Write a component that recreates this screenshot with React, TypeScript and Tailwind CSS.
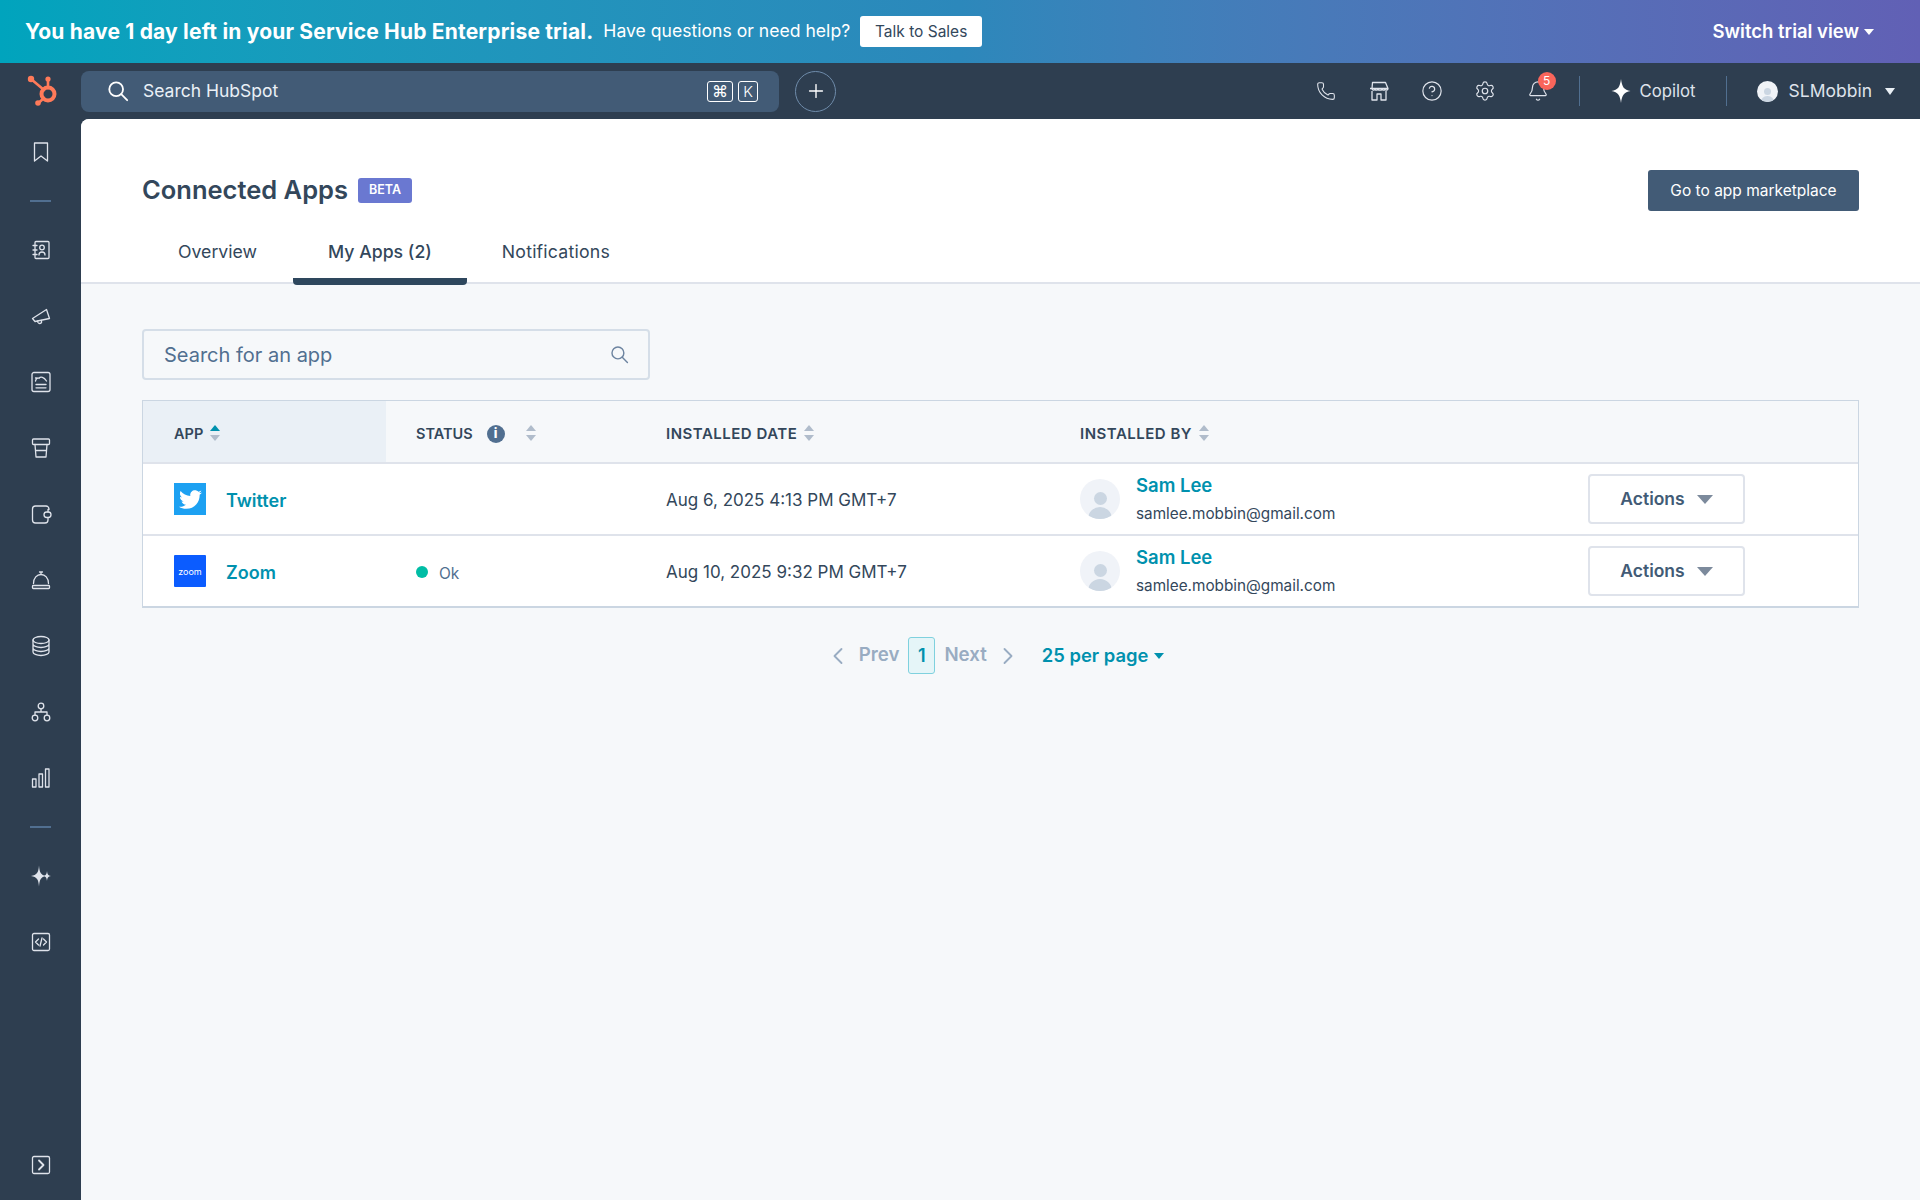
import { Phone, CircleHelp, Settings, Bell, Plus, ChevronLeft, ChevronRight } from "lucide-react"
import { FaTwitter } from "react-icons/fa"

const Ic = ({ children }: { children: React.ReactNode }) => (
  <svg width="24" height="24" viewBox="0 0 24 24" fill="none" stroke="currentColor" strokeWidth="1.3" strokeLinejoin="round" strokeLinecap="round" className="shrink-0 text-[#dfe3eb]">
    {children}
  </svg>
)

const Caret = ({ className }: { className: string }) => (
  <span className={`inline-block w-0 h-0 border-x-transparent border-b-0 ${className}`} />
)

const Magnifier = ({ className, stroke = 2 }: { className: string; stroke?: number }) => (
  <svg viewBox="0 0 24 24" fill="none" stroke="currentColor" strokeWidth={stroke} strokeLinecap="round" className={className}>
    <circle cx="10" cy="10" r="7.500" />
    <path d="M15.500 15.500 22 22" />
  </svg>
)

function SortArrows({ active = false }: { active?: boolean }) {
  return (
    <span className="inline-flex flex-col gap-[4px] ml-[7px] -mt-[2px]">
      <span className={`w-0 h-0 border-x-[5px] border-x-transparent border-b-[6px] ${active ? "border-b-[#0091ae]" : "border-b-[#b0bccb]"}`} />
      <span className="w-0 h-0 border-x-[5px] border-x-transparent border-t-[6px] border-t-[#b0bccb]" />
    </span>
  )
}

function Sidebar() {
  return (
    <div className="w-[81px] shrink-0 flex flex-col items-center pt-[21px] pb-[23px]">
      <Ic><path d="M5.500 3h13v18L12 16l-6.500 5z" /></Ic>
      <div className="w-[21px] h-[2px] bg-[#516f90] mt-[36px] mb-[36px]" />
      <div className="flex flex-col gap-[42px]">
        <Ic>
          <rect x="6" y="3.500" width="14" height="17" rx="1" />
          <path d="M4 7.500h4M4 12h4M4 16.500h4M10 17c0-4 6-4 6 0" />
          <circle cx="13" cy="9.500" r="2.300" />
        </Ic>
        <Ic>
          <path d="M3.500 14.500 17.500 5.500 20.500 14.500 6 17.500z" />
          <path d="M8.500 17l.5 1.500a2 2 0 0 0 3.600-.3l-.3-1.800" />
        </Ic>
        <Ic>
          <rect x="3" y="2.500" width="18" height="19" rx="2" />
          <path d="M6.500 11c.5-2.500 2-3.500 3.500-2.700 1.500-2 5-1.500 7.500 2.700M6.500 8h1M7 14.500h10M7 17.800h10" />
        </Ic>
        <Ic>
          <rect x="3.500" y="3" width="17" height="5.500" rx="1" />
          <path d="M6 8.500 7 21h10l1-12.500M6.500 14.500h11" />
        </Ic>
        <Ic>
          <path d="M20 7.500V7a3 3 0 0 0-3-3H6.500M19 16.500V18a3 3 0 0 1-3 3H6.500a3 3 0 0 1-3-3V7a3 3 0 0 1 3-3M19 7.500V10" />
          <rect x="15" y="10" width="7" height="5.500" rx="2.700" />
        </Ic>
        <Ic>
          <path d="M4.500 15.500C4.500 10 8 6.500 12 6.500s7.500 3.500 7.500 9M12 6.500V4.500M10.500 4h3" />
          <rect x="3.500" y="17.500" width="17" height="3" rx=".8" />
        </Ic>
        <Ic>
          <ellipse cx="12" cy="6" rx="8" ry="3.500" />
          <path d="M4 6v12c0 1.900 3.600 3.500 8 3.500s8-1.600 8-3.500V6M4 10c0 1.900 3.600 3.500 8 3.500s8-1.600 8-3.500M4 14c0 1.900 3.600 3.500 8 3.500s8-1.600 8-3.500" />
        </Ic>
        <Ic>
          <circle cx="12" cy="6" r="2.800" />
          <circle cx="6" cy="18" r="2.800" />
          <circle cx="18" cy="18" r="2.800" />
          <path d="M12 8.800V12M6 15.200V12h12v3.200" />
        </Ic>
        <Ic>
          <rect x="3.500" y="13" width="3.500" height="8" />
          <rect x="10" y="8" width="3.500" height="13" />
          <rect x="16.500" y="3" width="3.500" height="18" />
        </Ic>
      </div>
      <div className="w-[21px] h-[2px] bg-[#516f90] mt-[36px] mb-[36px]" />
      <div className="flex flex-col gap-[42px]">
        <Ic>
          <path fill="currentColor" stroke="none" d="M10 1.500c.6 7 1.800 9.500 7 10.500-5.200 1-6.400 3.500-7 10.500-.6-7-1.900-9.500-8-10.500 6.100-1 7.400-3.500 8-10.500zM18 7c.3 3 1 4.400 4 5-3 .6-3.700 2-4 5-.3-3-1-4.400-4-5 3-.6 3.700-2 4-5z" />
        </Ic>
        <Ic>
          <rect x="3.500" y="3.500" width="17" height="17" rx="1.500" />
          <path d="M9.500 9 6.500 12l3 3M14.500 9l3 3-3 3M13 8l-2 8" />
        </Ic>
      </div>
      <div className="mt-auto">
        <Ic>
          <rect x="3.500" y="3.500" width="17" height="17" rx="1.500" />
          <path d="M10 7.500l4.500 4.500-4.500 4.500" strokeWidth="1.800" />
        </Ic>
      </div>
    </div>
  )
}

function TopBar() {
  return (
    <div className="h-[56px] shrink-0 flex items-center text-white">
      <div className="w-[81px] shrink-0 flex justify-center">
        <svg width="34" height="34" viewBox="0 0 34 34" fill="none" stroke="#ff7a59" strokeLinecap="round">
          <circle cx="24" cy="20" r="6.500" strokeWidth="4" />
          <path d="M7 5l13 11M24 5v9M14.500 29l5.500-5" strokeWidth="2.600" />
          <circle cx="7" cy="5" r="3.200" fill="#ff7a59" stroke="none" />
          <circle cx="24" cy="5" r="2.600" fill="#ff7a59" stroke="none" />
          <circle cx="14" cy="29" r="2.800" fill="#ff7a59" stroke="none" />
        </svg>
      </div>
      <div className="w-[698px] h-[41px] rounded-lg bg-[#425b76] flex items-center pl-[26px] pr-[21px]">
        <Magnifier className="w-[22px] h-[22px] text-white" />
        <span className="ml-[14px] text-[17.500px] mt-[1px] text-[#eaf0f6]">Search HubSpot</span>
        <div className="ml-auto flex gap-[5px]">
          <span className="w-[26px] h-[21px] border border-white rounded-[3px] flex items-center justify-center text-[16px] leading-none">⌘</span>
          <span className="w-[20px] h-[21px] border border-white rounded-[3px] flex items-center justify-center text-[15px] font-light leading-none">K</span>
        </div>
      </div>
      <div className="ml-[16px] w-[41px] h-[41px] rounded-full border border-[#6f8cab] flex items-center justify-center">
        <Plus className="w-[22px] h-[22px]" strokeWidth={1.5} />
      </div>
      <div className="ml-auto flex items-center pr-[25px] text-[#dfe3eb]">
        <div className="flex items-center gap-[31px]">
          <Phone className="w-[22px] h-[22px] p-px" strokeWidth={1.3} />
          <svg width="22" height="22" viewBox="0 0 22 22" fill="none" stroke="currentColor" strokeWidth="1.300" strokeLinejoin="round">
            <path d="M4.500 2.500h13l2.500 6c0 2-2.200 2-3 .8-.7 1.200-2.600 1.200-3 0-.7 1.200-3.300 1.200-4 0-.4 1.200-2.300 1.200-3 0-.8 1.200-3 1.200-3-.8zM2 8.500h18" />
            <path d="M4 11v9h5v-6h4v6h5v-9" />
          </svg>
          <CircleHelp className="w-[22px] h-[22px]" strokeWidth={1.3} />
          <Settings className="w-[22px] h-[22px]" strokeWidth={1.3} />
          <div className="relative">
            <Bell className="w-[22px] h-[22px]" strokeWidth={1.3} />
            <span className="absolute -top-[8px] left-[11px] w-[18px] h-[18px] rounded-full bg-[#f9655b] text-[12px] text-white flex items-center justify-center">5</span>
          </div>
        </div>
        <div className="w-px h-[30px] bg-[#516f90] ml-[30px]" />
        <svg width="22" height="26" viewBox="0 0 22 26" className="ml-[30px] text-white" fill="currentColor">
          <path d="M11 1c1 8 3 11 9.500 12C14 14 12 17 11 25c-1-8-3-11-9.500-12C8 12 10 9 11 1z" />
        </svg>
        <span className="ml-[8px] text-[16.700px] mt-[2px]">Copilot</span>
        <div className="w-px h-[30px] bg-[#516f90] ml-[30px]" />
        <div className="ml-[30px] w-[21px] h-[21px] rounded-full bg-[#f0f3f7] overflow-hidden flex flex-col items-center justify-end">
          <span className="w-[7px] h-[7px] rounded-full bg-[#cbd6e2]" />
          <span className="w-[13px] h-[6px] rounded-t-full bg-[#cbd6e2] mt-px" />
        </div>
        <span className="ml-[11px] text-[17.500px] mt-[1px]">SLMobbin</span>
        <Caret className="ml-[13px] border-x-[5.500px] border-t-[7px] border-t-[#eaf0f6]" />
      </div>
    </div>
  )
}

function Row({ icon, name, ok, date }: { icon: React.ReactNode; name: string; ok?: boolean; date: string }) {
  return (
    <div className="grid grid-cols-[243px_249px_414px_508px_1fr] items-center h-[72px] bg-white border-t-2 border-[#dfe3eb]">
      <div className="pl-[31px] flex items-center">
        {icon}
        <span className="ml-[20px] mt-[2px] text-[18px] font-semibold text-[#0091ae]">{name}</span>
      </div>
      <div className="pl-[30px] mt-[2px] flex items-center">
        {ok && (
          <>
            <span className="w-[12px] h-[12px] rounded-full bg-[#00bda5]" />
            <span className="ml-[11px] text-[15.500px] text-[#516f90] mt-[3px]">Ok</span>
          </>
        )}
      </div>
      <div className="pl-[31px] text-[17px] text-[#33475b] mt-[3px]">{date}</div>
      <div className="pl-[31px] flex items-center">
        <div className="w-[40px] h-[40px] rounded-full bg-[#f0f3f8] overflow-hidden flex flex-col items-center justify-end">
          <span className="w-[13px] h-[13px] rounded-full bg-[#cbd6e2]" />
          <span className="w-[24px] h-[12px] rounded-t-full bg-[#cbd6e2] mt-[2px]" />
        </div>
        <div className="ml-[16px] flex flex-col gap-[7px]">
          <span className="text-[18.500px] leading-[22px] font-semibold text-[#0091ae]">Sam Lee</span>
          <span className="text-[15.300px] leading-[22px] text-[#33475b]">samlee.mobbin@gmail.com</span>
        </div>
      </div>
      <div className="pl-[31px]">
        <div className="w-[157px] h-[50px] bg-white border-2 border-[#dfe3eb] rounded-[4px] flex items-center justify-center">
          <span className="text-[17.500px] font-semibold text-[#425b76]">Actions</span>
          <Caret className="ml-[12px] border-x-[8px] border-t-[9px] border-t-[#7c8a9c]" />
        </div>
      </div>
    </div>
  )
}

export default function App() {
  return (
    <div className="h-screen w-full overflow-hidden flex flex-col bg-[#2e3e50] [font-family:Inter,sans-serif]">
      <div className="h-[63px] shrink-0 flex items-center pl-[25px] pr-[46px] bg-gradient-to-r from-[#00a4bd] via-[#2c88bb] to-[#6160b5] text-white">
        <span className="text-[21px] font-bold tracking-[.185px]">You have 1 day left in your Service Hub Enterprise trial.</span>
        <span className="ml-[10px] text-[17.600px]">Have questions or need help?</span>
        <button className="ml-[10px] w-[122px] h-[31px] bg-white rounded-[3px] text-[15.500px] text-[#33475b]">Talk to Sales</button>
        <span className="ml-auto text-[18.500px] font-semibold">Switch trial view</span>
        <Caret className="ml-[5px] border-x-[5px] border-t-[6px] border-t-white" />
      </div>
      <TopBar />
      <div className="flex-1 flex min-h-0">
        <Sidebar />
        <main className="flex-1 bg-[#f6f8fa] rounded-tl-lg overflow-hidden text-[#33475b]">
          <div className="bg-white border-b-2 border-[#dfe3eb] pt-[51px] px-[61px] h-[165px]">
            <div className="flex items-center justify-between h-[41px]">
              <div className="flex items-center">
                <h1 className="text-[25.500px] font-semibold text-[#33475b]">Connected Apps</h1>
                <span className="ml-[10px] h-[25px] px-[11px] rounded-[3px] bg-[#6a78d1] text-white text-[12.500px] font-semibold flex items-center">BETA</span>
              </div>
              <button className="w-[211px] h-[41px] bg-[#425b76] rounded-[3px] text-white text-[15.500px]">Go to app marketplace</button>
            </div>
            <div className="flex mt-[26px] text-[17.700px]">
              <div className="px-[36px] h-[48px] pt-[3px] leading-[24px]">Overview</div>
              <div className="px-[35px] h-[48px] pt-[3px] leading-[24px] font-medium border-b-[7px] border-[#2e475d] rounded-b-sm">My Apps (2)</div>
              <div className="px-[35px] h-[48px] pt-[3px] leading-[24px] tracking-[.2px]">Notifications</div>
            </div>
          </div>
          <div className="px-[61px] pt-[45px]">
            <div className="w-[508px] h-[51px] border-2 border-[#d5dee8] rounded-[4px] bg-[#f6f8fa] flex items-center pl-[20px] pr-[19px]">
              <span className="text-[20px] text-[#516f90]">Search for an app</span>
              <Magnifier className="ml-auto w-[19px] h-[19px] text-[#6d84a0]" stroke={1.8} />
            </div>
            <div className="mt-[20px] border border-b-2 border-[#cbd6e2]">
              <div className="grid grid-cols-[243px_249px_414px_508px_1fr] h-[61px] items-center text-[14.500px] font-semibold text-[#33475b]">
                <div className="h-full pl-[31px] pt-[4px] bg-[#eaf0f6] flex items-center">
                  APP<SortArrows active />
                </div>
                <div className="pl-[30px] pt-[4px] flex items-center">
                  STATUS
                  <span className="ml-[14px] w-[18px] h-[18px] rounded-full bg-[#516f90] text-white text-[13px] font-extrabold flex items-center justify-center">i</span>
                  <span className="ml-[14px] flex"><SortArrows /></span>
                </div>
                <div className="pl-[31px] pt-[5px] flex items-center text-[15px] tracking-[.5px]">
                  INSTALLED DATE<SortArrows />
                </div>
                <div className="pl-[31px] pt-[5px] flex items-center text-[15px] tracking-[.5px]">
                  INSTALLED BY<SortArrows />
                </div>
              </div>
              <Row
                name="Twitter"
                date="Aug 6, 2025 4:13 PM GMT+7"
                icon={
                  <span className="w-[32px] h-[32px] bg-[#1da1f2] flex items-center justify-center">
                    <FaTwitter className="w-[23px] h-[23px] text-white" />
                  </span>
                }
              />
              <Row
                name="Zoom"
                ok
                date="Aug 10, 2025 9:32 PM GMT+7"
                icon={
                  <span className="w-[32px] h-[32px] bg-[#0b5cff] rounded-[1px] flex items-center justify-center text-white text-[9px] leading-none">zoom</span>
                }
              />
            </div>
            <div className="mt-[29px] pr-[13px] flex items-center justify-center h-[37px] font-semibold text-[18.700px]">
              <ChevronLeft className="w-[28px] h-[28px] text-[#99acc2]" strokeWidth={1.6} />
              <span className="ml-[7px] text-[#99acc2]">Prev</span>
              <span className="ml-[9px] w-[27px] h-[37px] bg-[#e5f5f8] border border-[#7fd1de] rounded-[3px] text-[18px] text-[#0091ae] flex items-center justify-center">1</span>
              <span className="ml-[9px] text-[#99acc2]">Next</span>
              <ChevronRight className="ml-[7px] w-[28px] h-[28px] text-[#99acc2]" strokeWidth={1.6} />
              <span className="ml-[20px] text-[18.400px] text-[#0091ae]">25 per page</span>
              <Caret className="ml-[6px] border-x-[5px] border-t-[6px] border-t-[#0091ae]" />
            </div>
          </div>
        </main>
      </div>
    </div>
  )
}
